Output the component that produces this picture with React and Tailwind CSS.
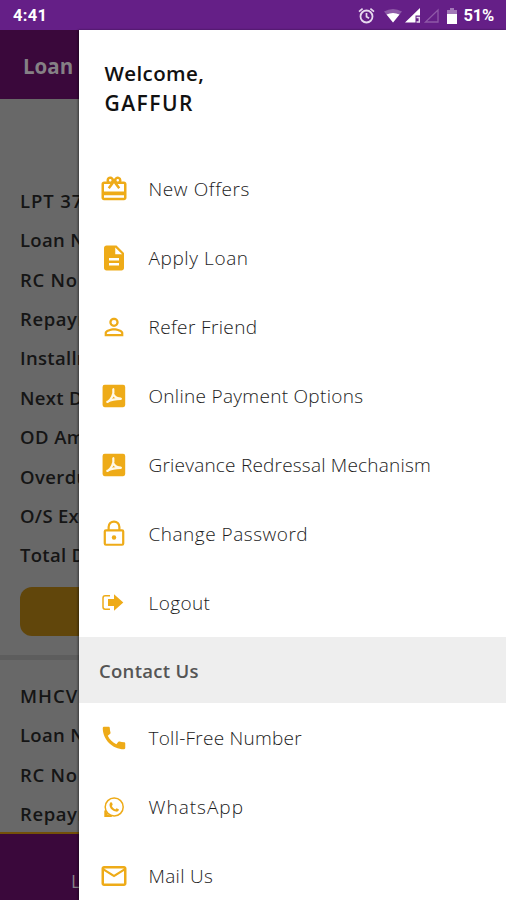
import React from "react";
import { MdCardGiftcard, MdDescription, MdPersonOutline, MdCall, MdMailOutline } from "react-icons/md";

function Pdf() {
  return (
    <svg width="28" height="28" viewBox="0 0 24 24" fill="none">
      <rect x="2.2" y="2.4" width="19.4" height="19.2" rx="1.8" fill="#eeab18" />
      <path d="M11.400 6.200c.4 2.300 0 4.600-1 6.400-1 1.900-2.200 3.700-3.900 4.500M6.300 17c3.500-2 7-2.600 11.600-2.600M11.300 10.500c1 2 3 3.600 6.400 4" stroke="#fff8e6" strokeWidth="1.900" strokeLinecap="round" />
    </svg>
  );
}

function Lock() {
  return (
    <svg width="28" height="28" viewBox="0 0 24 24" fill="none" stroke="#eeab18" strokeWidth="1.9">
      <rect x="4.100" y="8.800" width="15.800" height="12.400" rx="1" />
      <path d="M7.400 9V5.900a4.600 4.600 0 0 1 9.200 0V9" />
      <circle cx="12" cy="15" r="1.900" fill="#eeab18" stroke="none" />
    </svg>
  );
}

function Logout() {
  return (
    <svg width="26" height="20" viewBox="0 0 26 20" fill="none" className="-translate-x-px">
      <path d="M10 2.700H5.200Q3 2.700 3 4.900v9.200Q3 16.300 5.200 16.300H10" stroke="#eeab18" strokeWidth="1.500" />
      <path d="M8 6H14V1.300l9.300 8.200L14 17.700V13H8z" fill="#eeab18" />
    </svg>
  );
}

function WhatsApp() {
  return (
    <svg width="22" height="22" viewBox="0 0 22 22" fill="none">
      <circle cx="11.200" cy="11" r="9" stroke="#eeab18" strokeWidth="1.500" />
      <path d="M1.300 14.500h1.300l2.200 4.300 4 1v1.200h-7.500z" fill="#eeab18" />
      <path d="M7.600 6.200 9 6.400l.7 2.400-.9 1.300c.7 1.500 1.900 2.600 3.500 3.300l1.200-1.200 2.300 1.100c.3 1.500-1.200 2.500-2.700 2.300-3.700-.6-6.400-3.300-6.600-6.600 0-1.200.5-2.300 1.100-2.800z" fill="#eeab18" />
    </svg>
  );
}

const MENU = [
  { label: "New Offers", icon: <MdCardGiftcard size={30} />, track: "tracking-[0.600px]" },
  { label: "Apply Loan", icon: <MdDescription size={30} />, track: "tracking-[0.600px]" },
  { label: "Refer Friend", icon: <MdPersonOutline size={28} />, track: "tracking-[0.380px]" },
  { label: "Online Payment Options", icon: <Pdf />, track: "tracking-[0.300px]" },
  { label: "Grievance Redressal Mechanism", icon: <Pdf />, track: "tracking-[0.210px]" },
  { label: "Change Password", icon: <Lock />, track: "tracking-[0.510px]" },
  { label: "Logout", icon: <Logout />, track: "tracking-[0.400px]" },
];

const CONTACT = [
  { label: "Toll-Free Number", icon: <MdCall size={30} />, track: "tracking-[0.250px]" },
  { label: "WhatsApp", icon: <WhatsApp />, track: "tracking-[1px]" },
  { label: "Mail Us", icon: <MdMailOutline size={30} />, track: "tracking-[0.300px]" },
];

function Item({ label, icon, track }) {
  return (
    <li className="flex h-[69px] items-center">
      <span className="ml-[19.5px] flex w-[30px] shrink-0 justify-center text-[#eeab18]">{icon}</span>
      <span className={"ml-[20px] whitespace-nowrap pt-[1px] text-[19px] font-light text-[#1c1c1c] " + track}>{label}</span>
    </li>
  );
}

function Rows({ items }) {
  return items.map(([text, track]) => (
    <div key={text} className={"flex h-[39.4px] shrink-0 items-center whitespace-nowrap pl-5 text-[18.500px] font-semibold " + track}>
      {text}
    </div>
  ));
}

const FIRST_LOAN = [
  ["LPT 3718", "tracking-[0.900px]"],
  ["Loan No", "tracking-[0.300px]"],
  ["RC No", "tracking-[0.700px]"],
  ["Repayment", "tracking-[0.600px]"],
  ["Installment", "tracking-[0.300px]"],
  ["Next Due", "tracking-[0.300px]"],
  ["OD Amount", "tracking-[0.400px]"],
  ["Overdue", "tracking-[0.400px]"],
  ["O/S Exposure", "tracking-[0.300px]"],
  ["Total Due", "tracking-[0.300px]"],
];

const SECOND_LOAN = [
  ["MHCV", "tracking-[1px]"],
  ["Loan No", "tracking-[0.300px]"],
  ["RC No", "tracking-[0.700px]"],
  ["Repayment", "tracking-[0.600px]"],
];

function StatusBar() {
  return (
    <header className="flex h-[30px] shrink-0 items-center justify-between bg-[#651f87] pl-[13px] pr-[12px] pt-[2px] font-['Roboto',sans-serif] text-[16.500px] font-bold text-white">
      <span className="tracking-[0.300px]">4:41</span>
      <div className="flex items-center">
        <svg width="88" height="22" viewBox="0 0 88 22" fill="none" className="mr-[4px]">
          <circle cx="11.500" cy="11.500" r="6" stroke="#e7d9ee" strokeWidth="1.800" />
          <path d="M11.500 8v3.700l2.600 1.600M4 6.700l3.600-3M19 6.700l-3.600-3" stroke="#e7d9ee" strokeWidth="1.700" />
          <path d="M29 6.500q9-5 18 0L38 17.500z" fill="#8e5ba7" />
          <path d="M31.500 9.500q6.500-3 13 0L38 17.500z" fill="#fff" />
          <path d="M65 3v7.500H60.500v7H50z" fill="#fff" />
          <path d="M61.500 12.500h3.500M61.500 17h3.500M64.300 12v5.500" stroke="#e7d9ee" strokeWidth="1.400" />
          <path d="M83 5v12H70.500z" stroke="#8f59a8" strokeWidth="1.300" />
        </svg>
        <svg width="10" height="16" viewBox="0 0 10 16" className="mr-[6px]">
          <path d="M3 0h4v2h3v4H0V2h3z" fill="#a379b8" />
          <path d="M0 6h10v10H0z" fill="#fff" />
        </svg>
        <span className="tracking-[-0.200px]">51%</span>
      </div>
    </header>
  );
}

export default function App() {
  return (
    <div className="relative flex h-[900px] w-[506px] flex-col overflow-hidden bg-[#686868] font-['Open_Sans',sans-serif] text-[#151515]">
      <StatusBar />
      <div className="flex h-[69px] shrink-0 items-center bg-[#3a083b] pl-[23px] pt-[3px] text-[20.500px] font-bold text-[#858085]">Loan</div>
      <main className="flex min-h-0 flex-1 flex-col overflow-hidden pt-[82px]">
        <Rows items={FIRST_LOAN} />
        <div className="ml-5 mt-[12px] h-[49px] w-[466px] shrink-0 rounded-[12px] bg-[#61460b]" />
        <div className="mb-[16px] mt-[19px] h-[5px] shrink-0 bg-[#5d5d5d]" />
        <Rows items={SECOND_LOAN} />
      </main>
      <footer className="h-[68px] shrink-0 border-t-2 border-[#735009] bg-[#3a083b] pl-[71px] pt-[34px] text-[18px] text-[#858085]">Loans</footer>
      <aside className="absolute bottom-0 left-[79px] right-0 top-[30px] overflow-hidden bg-white shadow-[-1px_0_2px_rgba(0,0,0,0.450)]">
        <h1 className="flex flex-col pl-[25.5px] pt-[28px] text-[20.500px] font-semibold leading-[30px] text-[#111]">
          <span className="tracking-[0.400px]">Welcome,</span>
          <span className="text-[21px] tracking-[1.500px]">GAFFUR</span>
        </h1>
        <ul className="mt-[36px]">
          {MENU.map((m) => <Item key={m.label} {...m} />)}
        </ul>
        <h2 className="flex h-[66px] items-center bg-[#eee] pl-5 pt-[2px] text-[18.500px] font-semibold tracking-[0.300px] text-[#555]">Contact Us</h2>
        <ul>
          {CONTACT.map((m) => <Item key={m.label} {...m} />)}
        </ul>
      </aside>
    </div>
  );
}
